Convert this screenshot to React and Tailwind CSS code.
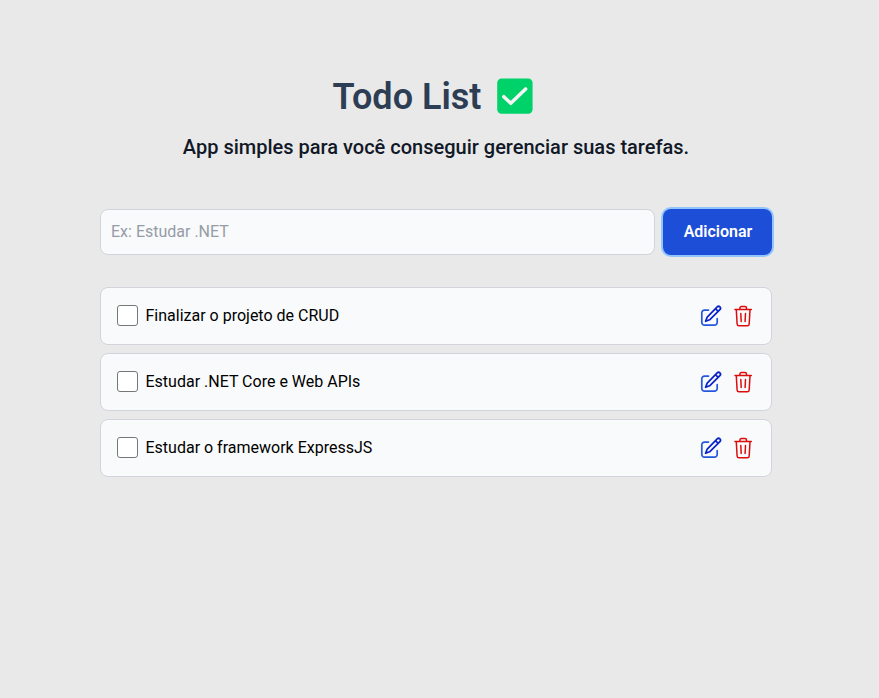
const tasks = [
  "Finalizar o projeto de CRUD",
  "Estudar .NET Core e Web APIs",
  "Estudar o framework ExpressJS",
];

function CheckEmoji() {
  return (
    <svg width="36" height="36" viewBox="0 0 36 36">
      <rect x=".2" y=".4" width="35.4" height="35.4" rx="4.5" fill="#00d26a" />
      <path d="M6.800 18.700 13.800 25.300 28.600 10.900" fill="none" stroke="#f4f4f4" strokeWidth="3.5" strokeLinecap="round" strokeLinejoin="round" />
    </svg>
  );
}

function EditIcon() {
  return (
    <svg width="22" height="22" viewBox="0 0 22 22" fill="none" strokeWidth="1.7" strokeLinecap="round" strokeLinejoin="round">
      <path d="M8.500 5.100H4.500a2.700 2.700 0 0 0-2.700 2.700v9.700a2.700 2.700 0 0 0 2.700 2.700h10a2.700 2.700 0 0 0 2.700-2.700V13.500" stroke="#2457dc" />
      <path d="M17.200 1.900a1.800 1.800 0 0 1 2.700 2.700L9.600 14.800l-4 1.500 1.600-4.200zM15.500 3.700l2.600 2.600" stroke="#0822c8" />
    </svg>
  );
}

function TrashIcon() {
  return (
    <svg width="22" height="22" viewBox="0 0 22 22" fill="none" stroke="#dc0c0c" strokeWidth="1.5" strokeLinecap="round" strokeLinejoin="round">
      <path d="M3 4.500h16.300M7.900 4.500V3a1.500 1.500 0 0 1 1.500-1.500h3.600A1.500 1.500 0 0 1 14.500 3v1.500M4.300 4.700l.8 14.300a1.900 1.900 0 0 0 1.900 1.800h8.300a1.900 1.900 0 0 0 1.900-1.800L18 4.700M8.800 8.500l.4 8M13.500 8.500l-.4 8" />
    </svg>
  );
}

export default function App() {
  return (
    <main className="flex min-h-screen flex-col bg-[#e9e9e9] pl-[100px] pt-[77px] font-['Roboto',sans-serif] text-[#111827]">
      <header className="flex w-[672px] flex-col items-center">
        <h1 className="flex h-10 items-center gap-4 pr-1.5 text-4xl font-semibold text-[#2c3d54]">
          Todo List <span className="-mt-0.5"><CheckEmoji /></span>
        </h1>
        <p className="mt-4 text-xl font-medium">App simples para você conseguir gerenciar suas tarefas.</p>
      </header>
      <form className="mt-12 flex h-[46px] w-[672px] gap-2">
        <input className="h-[46px] w-[555px] rounded-lg border border-[#d1d5db] bg-[#f9fafb] px-2.5 pb-0.5 text-base placeholder:text-[#969ca6]" placeholder="Ex: Estudar .NET" />
        <button type="button" className="h-[46px] w-[109px] rounded-lg bg-[#1d4ed8] pl-px font-semibold text-white ring-2 ring-[#93c5fd]">Adicionar</button>
      </form>
      <ul className="mt-8 flex w-[672px] flex-col gap-2">
        {tasks.map((t) => (
          <li key={t} className="flex h-[58px] items-center rounded-lg border border-[#d1d5db] bg-[#f9fafb] px-4">
            <span className="mb-px size-[21px] rounded-[3px] border border-[#767676] bg-white" />
            <span className="ml-[7.5px] flex-1 text-black">{t}</span>
            <span className="mr-[1px] flex gap-2.5"><EditIcon /><TrashIcon /></span>
          </li>
        ))}
      </ul>
    </main>
  );
}
